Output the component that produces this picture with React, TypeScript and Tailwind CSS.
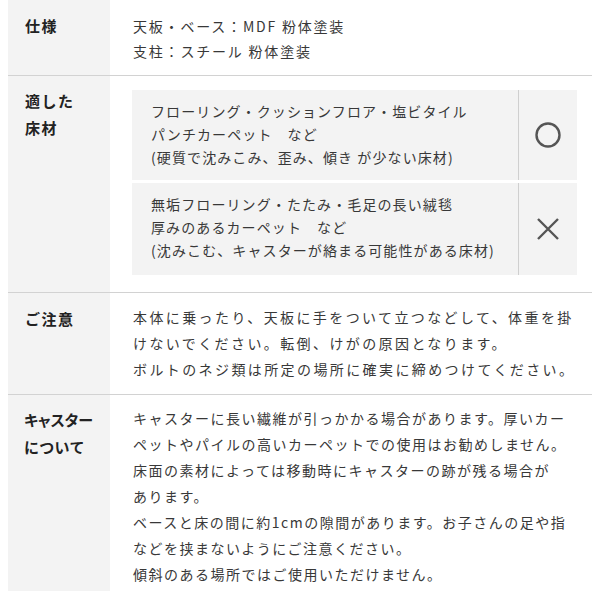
export default function App() {
  return (
    <div className="w-[600px] h-[600px] bg-white px-2 text-[#383838] font-['Noto_Sans_CJK_JP','Noto_Sans',sans-serif]">
      {/* 仕様 */}
      <div className="flex border-b border-[#d2d2d2]">
        <div className="w-[102px] shrink-0 bg-[#f3f3f3] pl-[17px] pt-[12px] text-[15px] leading-[27px] font-bold tracking-[1.5px] text-[#222]">
          仕様
        </div>
        <div className="flex-1 pl-[23px] pr-[15px] pt-[14px] pb-[11px] text-[14px] leading-[25px] tracking-[1.8px]">
          <p>天板・ベース：MDF 粉体塗装</p>
          <p>支柱：スチール 粉体塗装</p>
        </div>
      </div>

      {/* 適した床材 */}
      <div className="flex border-b border-[#d2d2d2]">
        <div className="w-[102px] shrink-0 bg-[#f3f3f3] pl-[17px] pt-[11px] text-[15px] leading-[27px] font-bold tracking-[1.5px] text-[#222]">
          適した
          <br />
          床材
        </div>
        <div className="flex-1 pl-[22px] pr-[15px] pt-[14px] pb-[17px] flex flex-col gap-[3px]">
          <div className="flex bg-[#f3f3f3]">
            <div className="flex-1 pl-[19px] pt-[10px] pb-[11px] text-[14px] leading-[23px] tracking-[1.1px]">
              <p>フローリング・クッションフロア・塩ビタイル</p>
              <p>パンチカーペット　など</p>
              <p>(硬質で沈みこみ、歪み、傾き が少ない床材)</p>
            </div>
            <div className="w-[59px] border-l border-[#cfcfcf] flex items-center justify-center">
              <svg width="28" height="28" viewBox="0 0 28 28" fill="none">
                <circle cx="14" cy="14" r="11.5" stroke="#555" strokeWidth="2.4" />
              </svg>
            </div>
          </div>
          <div className="flex bg-[#f3f3f3]">
            <div className="flex-1 pl-[19px] pt-[10px] pb-[13px] text-[14px] leading-[23px] tracking-[1.1px]">
              <p>無垢フローリング・たたみ・毛足の長い絨毯</p>
              <p>厚みのあるカーペット　など</p>
              <p>(沈みこむ、キャスターが絡まる可能性がある床材)</p>
            </div>
            <div className="w-[59px] border-l border-[#cfcfcf] flex items-center justify-center">
              <svg width="24" height="24" viewBox="0 0 24 24" fill="none">
                <path d="M2 2 L22 22 M22 2 L2 22" stroke="#555" strokeWidth="2.4" />
              </svg>
            </div>
          </div>
        </div>
      </div>

      {/* ご注意 */}
      <div className="flex border-b border-[#d2d2d2]">
        <div className="w-[102px] shrink-0 bg-[#f3f3f3] pl-[17px] pt-[12px] text-[15px] leading-[27px] font-bold tracking-[1.5px] text-[#222]">
          ご注意
        </div>
        <div className="flex-1 pl-[23px] pr-[8px] pt-[11px] pb-[12px] text-[14px] leading-[26px] tracking-[2.4px]">
          <p>本体に乗ったり、天板に手をついて立つなどして、体重を掛</p>
          <p>けないでください。転倒、けがの原因となります。</p>
          <p>ボルトのネジ類は所定の場所に確実に締めつけてください。</p>
        </div>
      </div>

      {/* キャスターについて */}
      <div className="flex">
        <div className="w-[102px] shrink-0 bg-[#f3f3f3] pl-[16px] pt-[11px] text-[15px] leading-[27px] font-bold text-[#222] whitespace-nowrap [font-feature-settings:'palt']">
          キャスター
          <br />
          <span className="tracking-[1px]">について</span>
        </div>
        <div className="flex-1 pl-[23px] pr-[10px] pt-[10px] pb-[4px] text-[14px] leading-[26px] tracking-[1.5px]">
          <p>キャスターに長い繊維が引っかかる場合があります。厚いカー</p>
          <p>ペットやパイルの高いカーペットでの使用はお勧めしません。</p>
          <p>床面の素材によっては移動時にキャスターの跡が残る場合が</p>
          <p>あります。</p>
          <p>ベースと床の間に約1cmの隙間があります。お子さんの足や指</p>
          <p>などを挟まないようにご注意ください。</p>
          <p>傾斜のある場所ではご使用いただけません。</p>
        </div>
      </div>
    </div>
  );
}
